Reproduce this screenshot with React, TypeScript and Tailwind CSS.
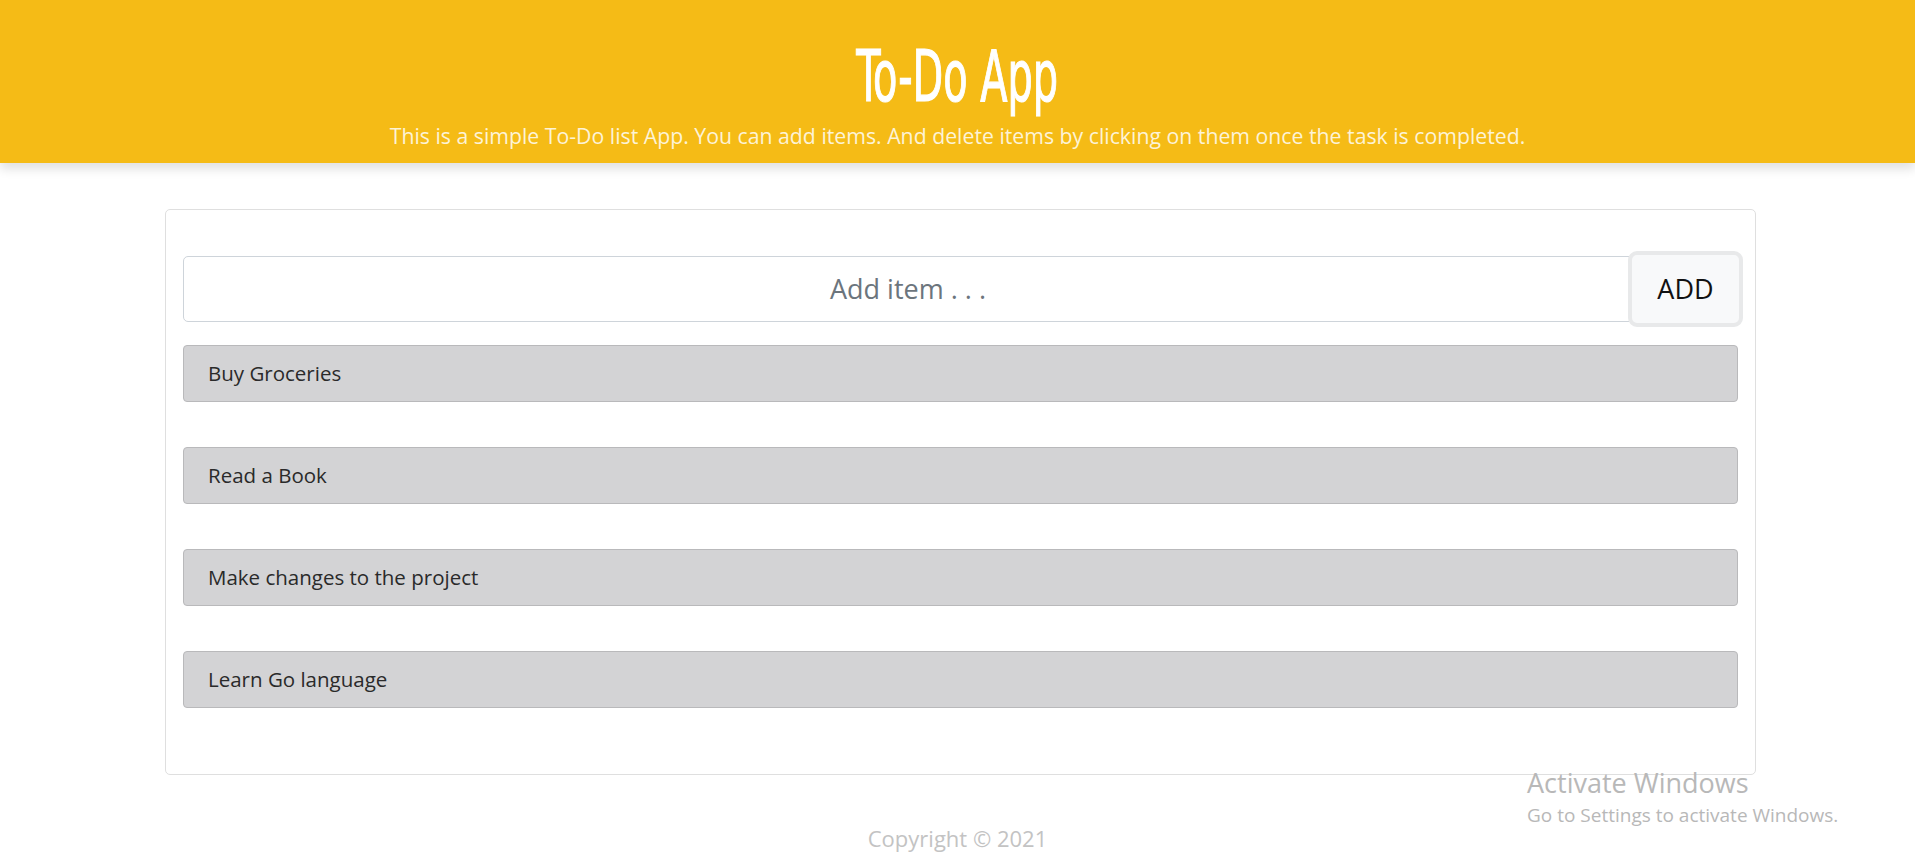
import React from "react";

const items = ["Buy Groceries", "Read a Book", "Make changes to the project", "Learn Go language"];

export default function App() {
  return (
    <div className="relative min-h-[862px] bg-white" style={{ fontFamily: '"Open Sans", "Noto Sans", sans-serif' }}>
      <header className="relative z-10 flex h-[163px] flex-col items-center bg-[#f5bb16] shadow-[0_6px_10px_rgba(0,0,0,0.12)]">
        <h1
          className="mt-[40px] inline-block h-[72px] origin-center scale-x-[0.615] text-[72px] font-normal leading-[72px] text-white [-webkit-text-stroke:1.2px_white]"
          style={{ fontFamily: '"DejaVu Sans", sans-serif', fontStretch: "condensed" }}
        >
          To-Do App
        </h1>
        <p className="mt-[10px] text-[21.25px] font-normal leading-[28px] text-[#fdf3d6]">
          This is a simple To-Do list App. You can add items. And delete items by clicking on them once the task is completed.
        </p>
      </header>

      <main className="ml-[165px] mt-[46px] w-[1591px] rounded-[5px] border border-[#dfdfdf] px-[17px] pb-[66px] pt-[41px]">
        <div className="mr-[-5px] flex items-center">
          <div className="flex h-[66px] flex-1 items-center justify-center rounded-l-[5px] border border-[#ced4da] bg-white">
            <span className="text-[27px] text-[#6c757d]">Add item . . .</span>
          </div>
          <button className="ml-[-5px] flex h-[76px] w-[115px] items-center justify-center rounded-[9px] border-[4px] border-[#e8e9ea] bg-[#f8f9fa] text-[27px] text-[#111]">
            ADD
          </button>
        </div>
        <ul className="mt-[18px] flex flex-col gap-[45px]">
          {items.map((t) => (
            <li
              key={t}
              className="flex h-[57px] items-center rounded-[4px] border border-[#b9b9bb] bg-[#d3d3d5] pl-[24px] text-[20.5px] text-[#2a2a2a]"
            >
              {t}
            </li>
          ))}
        </ul>
      </main>

      <footer className="mt-[48px] text-center text-[22px] leading-[30px] text-[#c3c3c3]">Copyright © 2021</footer>

      <div className="absolute left-[1527px] top-[765px] text-[#b8b8b8]">
        <div className="text-[27px] leading-[36px]">Activate Windows</div>
        <div className="mt-[2px] text-[19px] leading-[24px]">Go to Settings to activate Windows.</div>
      </div>
    </div>
  );
}
